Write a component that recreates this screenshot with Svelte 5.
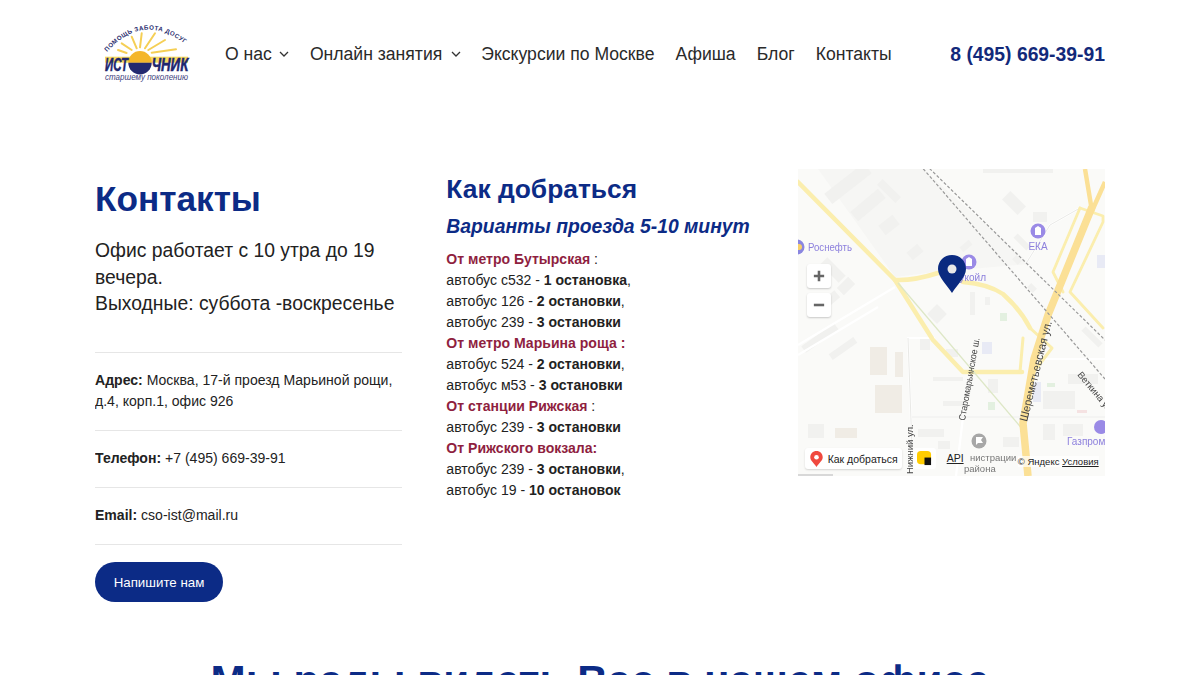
<script>
	const route = [
		{ t: 'От метро Бутырская', h: true, after: ' :' },
		{ t: 'автобус с532 - ', b: '1 остановка', after: ',' },
		{ t: 'автобус 126 - ', b: '2 остановки', after: ',' },
		{ t: 'автобус 239 - ', b: '3 остановки' },
		{ t: 'От метро Марьина роща :', h: true },
		{ t: 'автобус 524 - ', b: '2 остановки', after: ',' },
		{ t: 'автобус м53 - ', b: '3 остановки' },
		{ t: 'От станции Рижская', h: true, after: ' :' },
		{ t: 'автобус 239 - ', b: '3 остановки' },
		{ t: 'От Рижского вокзала:', h: true },
		{ t: 'автобус 239 - ', b: '3 остановки', after: ',' },
		{ t: 'автобус 19 - ', b: '10 остановок' }
	];

	// map blocks: x, y, w, h, angle
	const buildings = [
		[25, 8, 50, 13, -38], [52, 30, 36, 12, -40], [78, 18, 26, 8, 45], [82, 50, 18, 12, -38],
		[185, 0, 70, 4, 0], [205, 28, 22, 12, 45], [235, 43, 14, 10, 0], [215, 70, 18, 6, 45],
		[22, 96, 26, 10, 45], [40, 112, 16, 10, -45], [18, 128, 24, 9, -40], [2, 165, 40, 8, -35],
		[30, 176, 30, 7, -35], [72, 178, 17, 28, 0], [97, 183, 8, 25, 0], [10, 255, 16, 14, 0],
		[122, 169, 10, 12, 0], [172, 123, 5, 23, 0], [187, 128, 5, 8, 0], [132, 138, 14, 14, 45],
		[162, 74, 12, 6, -40], [282, 165, 24, 6, 45], [215, 88, 8, 6, 45], [230, 116, 8, 6, 45],
		[135, 208, 30, 4, 0], [190, 210, 10, 14, 0], [145, 232, 22, 5, 0], [148, 180, 12, 8, 0],
		[245, 222, 32, 18, 0], [270, 205, 30, 10, 0], [245, 255, 12, 16, 0], [265, 255, 20, 12, 0],
		[110, 78, 14, 10, -40], [120, 260, 26, 8, 0], [205, 268, 16, 10, 0], [140, 272, 12, 8, 0]
	];
</script>

<div class="page">
	<header class="top">
		<svg class="logo" viewBox="0 0 90 64" aria-label="Источник">
			<defs>
				<path id="arc" d="M3 30 Q 40 -12 85 25" />
			</defs>
			<text class="logo-arc"><textPath href="#arc" textLength="88">ПОМОЩЬ ЗАБОТА ДОСУГ</textPath></text>
			<g stroke="#f5cf55" stroke-width="2" stroke-linecap="round">
				<path d="M14 28 22.6 31" />
				<path d="M17.7 21.3 27.7 28" />
				<path d="M27.7 14.7 32.7 26.3" />
				<path d="M37.7 11.3 36 25.3" />
				<path d="M51 11.3 41 26.3" />
				<path d="M61 18 44.3 28" />
				<path d="M72 27.3 47.7 30.7" />
			</g>
			<rect x="1" y="34.7" width="83" height="6" fill="#f6d95f" />
			<path d="M24.3 40.7a11.7 11.7 0 0 1 23.4 0z" fill="#f4b62a" />
			<path d="M24.3 40.7a11.7 11.7 0 0 0 23.4 0z" fill="#23296f" />
			<text class="logo-name" x="1" y="48.7" textLength="23" lengthAdjust="spacingAndGlyphs">ИСТ</text>
			<text class="logo-name" x="47.7" y="48.7" textLength="36.6" lengthAdjust="spacingAndGlyphs">ЧНИК</text>
			<text class="logo-sub" x="1" y="57.5" textLength="83" lengthAdjust="spacingAndGlyphs">старшему поколению</text>
		</svg>
		<nav class="menu">
			<a href="#about">О нас <svg class="caret" viewBox="0 0 10 6"><path d="M1 1l4 4 4-4" /></svg></a>
			<a href="#online">Онлайн занятия <svg class="caret" viewBox="0 0 10 6"><path d="M1 1l4 4 4-4" /></svg></a>
			<a href="#tours">Экскурсии по Москве</a>
			<a href="#afisha">Афиша</a>
			<a href="#blog">Блог</a>
			<a href="#contacts">Контакты</a>
		</nav>
		<a class="phone" href="tel:+74956693991">8 (495) 669-39-91</a>
	</header>

	<main class="cols">
		<section class="info">
			<h1>Контакты</h1>
			<p class="hours">Офис работает с 10 утра до 19 вечера.<br />Выходные: суббота -воскресенье</p>
			<ul class="facts">
				<li><b>Адрес:</b> Москва, 17-й проезд Марьиной рощи, д.4, корп.1, офис 926</li>
				<li><b>Телефон:</b> +7 (495) 669-39-91</li>
				<li><b>Email:</b> cso-ist@mail.ru</li>
			</ul>
			<button type="button" class="write">Напишите нам</button>
		</section>

		<section class="way">
			<h2>Как добраться</h2>
			<h3>Варианты проезда 5-10 минут</h3>
			<div class="route">
				{#each route as r}
					<div>
						{#if r.h}<span class="stop">{r.t}</span>{:else}{r.t}<b>{r.b}</b>{/if}{r.after ?? ''}
					</div>
				{/each}
			</div>
		</section>

		<div class="map">
			<svg class="ground" viewBox="0 0 307 307">
				<rect width="307" height="307" fill="#fafaf8" />
				<path d="M20 0H125L232 95 137 103 97 108z" fill="#f6f6f4" />
				<g fill="#f1f1ef">
					{#each buildings as [x, y, w, h, a]}
						<rect {x} {y} width={w} height={h} transform="rotate({a} {x + w / 2} {y + h / 2})" />
					{/each}
				</g>
				<rect x="72" y="178" width="17" height="28" fill="#f0ece5" />
				<rect x="97" y="183" width="8" height="25" fill="#f0ece5" />
				<rect x="77" y="216" width="27" height="28" fill="#f0ece5" />
				<rect x="37" y="259" width="22" height="10" fill="#f0ece5" />
				<rect x="202" y="144" width="7" height="8" fill="#e3f0e0" />
				<rect x="190" y="233" width="7" height="8" fill="#e3f0e0" />
				<rect x="249" y="214" width="8" height="4" fill="#e3f0e0" />
				<rect x="184" y="173" width="10" height="12" fill="#e8eaf5" />
				<rect x="235" y="213" width="8" height="20" fill="#e8eaf5" />
				<rect x="299" y="86" width="8" height="13" fill="#e8eaf5" />
				<rect x="279" y="241" width="10" height="3" fill="#f5e2e2" />
				<g fill="none" stroke="#fff" stroke-width="2.2">
					<path d="M137 169H110L114 279" />
					<path d="M114 248H307" />
					<path d="M165 248 158 307" />
					<path d="M0 176 97 118" />
					<path d="M0 186 80 138" />
					<path d="M229 93 252 56 282 39" />
					<path d="M240 190H307" />
				</g>
				<g fill="none" stroke="#e9e9e6" stroke-width="1">
					<path d="M110 169 114 279" />
					<path d="M114 248H307" />
					<path d="M229 93 252 56 282 39" />
				</g>
				<g fill="none" stroke="#fbeeae" stroke-linejoin="round" stroke-linecap="round">
					<path stroke-width="4.5" d="M0 13 97 111 135 171 165 203H224" />
					<path stroke-width="4.5" d="M97 111Q115 112 140 104" />
					<path stroke-width="4.5" d="M165 113Q190 115 205 125 222 140 232 159" />
					<path stroke-width="3" d="M232 159 254 179 235 204M225 169 222 203" />
					<path stroke-width="2.8" d="M282 39 255 103 265 123" />
					<path stroke-width="2.8" d="M282 39 305 47 305 53 272 123 305 159" />
				</g>
				<path d="M100 114 226 262" fill="none" stroke="#dde7c6" stroke-width="1.3" />
				<g fill="none" stroke="#fbe096">
					<path stroke-width="7.5" d="M294 38 250 146 236 190 225 254 230 307" />
					<path stroke-width="4.5" d="M287 0 294 42M307 13 294 42" />
				</g>
				<g fill="none" stroke="#999" stroke-width="1.2" stroke-dasharray="3 2">
					<path d="M128 -4 307 171" />
					<path d="M122 -4 307 210" />
				</g>

				<g class="poi">
					<circle cx="240" cy="62" r="7.5" fill="#9a8ae6" />
					<path d="M237 66v-7l3-2 3 2v7z" fill="#fff" />
					<text x="240" y="81" text-anchor="middle">ЕКА</text>
					<circle cx="171" cy="93" r="7.5" fill="#9a8ae6" />
					<path d="M168 97v-7l3-2 3 2v7z" fill="#fff" />
					<text x="188" y="112" text-anchor="end">Лукойл</text>
					<circle cx="-1" cy="78" r="7.5" fill="#8a86e0" />
					<circle cx="1" cy="78" r="3" fill="#f7d06a" />
					<text x="10" y="82" class="rosneft" textLength="44" lengthAdjust="spacingAndGlyphs">Роснефть</text>
					<circle cx="303" cy="258" r="7" fill="#9a8ae6" />
					<text x="269" y="276">Газпром</text>
				</g>
				<g class="street">
					<text transform="translate(167 252) rotate(-80)" textLength="84" lengthAdjust="spacingAndGlyphs">Старомарьинское ш.</text>
					<text transform="translate(229 253) rotate(-76)" class="big" textLength="103" lengthAdjust="spacingAndGlyphs">Шереметьевская ул.</text>
					<text transform="translate(279 206) rotate(50)">Веткина ул.</text>
					<text transform="translate(115 305) rotate(-90)">Нижний ул.</text>
					<text x="172" y="292" class="grey">нистрации</text>
					<text x="166" y="303" class="grey">района</text>
				</g>
				<circle cx="181" cy="272" r="7.5" fill="#a7a7a7" />
				<path d="M178 276v-8h7l-2 3 2 3h-5" fill="#fff" />
				<rect x="0" y="305" width="35" height="2" fill="#d8d8d8" />
			</svg>

			<svg class="pin" viewBox="0 0 28 38">
				<path d="M14 0C6 0 0 6 0 14c0 8 9 16 14 24 5-8 14-16 14-24C28 6 22 0 14 0z" fill="#0a2a80" />
				<circle cx="14" cy="14" r="4.5" fill="#e8e8e8" />
			</svg>

			<div class="zoom plus"><svg viewBox="0 0 14 14"><path d="M7 1v12M1 7h12" /></svg></div>
			<div class="zoom minus"><svg viewBox="0 0 14 14"><path d="M1 7h12" /></svg></div>

			<div class="route-btn">
				<svg viewBox="0 0 14 18"><path d="M7 0C3 0 0 3 0 7c0 4 4 6 7 11 3-5 7-7 7-11 0-4-3-7-7-7z" fill="#f0493f" /><circle cx="7" cy="7" r="2.6" fill="#fff" /></svg>
				Как добраться
			</div>
			<div class="ya">
				<svg viewBox="0 0 16 16"><rect width="15" height="14" rx="4" fill="#fc0" /><rect x="8" y="7" width="7" height="8" fill="#111" /></svg>
			</div>
			<a class="api" href="#api">API</a>
			<div class="legal">© Яндекс <u>Условия</u></div>
		</div>
	</main>

	<h2 class="glad">Мы рады видеть Вас в нашем офисе</h2>
</div>

<style>
	:global(body) {
		margin: 0;
		background: #fff;
		font-family: 'Liberation Sans', Arial, sans-serif;
		color: #222;
		overflow: hidden;
	}

	.page {
		width: 1010px;
		margin: 0 auto;
		height: 675px;
		overflow: hidden;
	}

	.top {
		display: flex;
		align-items: center;
		height: 108px;
		padding-left: 9px;
	}
	.logo {
		width: 90px;
		height: 64px;
		flex: none;
	}
	.logo-arc {
		font-size: 6.2px;
		font-weight: 700;
		fill: #2b2f70;
	}
	.logo-name {
		font-size: 18px;
		font-weight: 700;
		font-style: italic;
		fill: #20266e;
		stroke: #20266e;
		stroke-width: 0.5;
	}
	.logo-sub {
		font-size: 8.5px;
		font-style: italic;
		fill: #3f4480;
	}

	.menu {
		display: flex;
		gap: 21px;
		margin-left: 31px;
		font-size: 17.6px;
	}
	.menu a {
		color: #2a2a2a;
		text-decoration: none;
		display: inline-flex;
		align-items: center;
		gap: 7px;
	}
	.menu a:nth-child(2) {
		gap: 9px;
		margin-right: -1px;
	}
	.caret {
		width: 10px;
		height: 6px;
		fill: none;
		stroke: #333;
		stroke-width: 1.3;
	}
	.phone {
		margin-left: auto;
		margin-top: 1px;
		font-size: 19.33px;
		font-weight: 700;
		color: #12297a;
		text-decoration: none;
	}

	.cols {
		display: grid;
		grid-template-columns: repeat(3, 1fr);
		column-gap: 44px;
		padding-top: 61px;
	}

	h1 {
		margin: 8px 0 0;
		font-size: 35.2px;
		line-height: 44px;
		color: #0c2b86;
	}
	.hours {
		margin: 17px 0 0;
		font-size: 19.33px;
		line-height: 26.5px;
		color: #222;
	}
	.facts {
		list-style: none;
		margin: 34px 0 0;
		padding: 0;
		border-top: 1px solid #e6e6e6;
		font-size: 14.05px;
		line-height: 21px;
	}
	.facts li {
		padding: 17px 0 18px;
		border-bottom: 1px solid #e6e6e6;
	}
	.write {
		display: block;
		margin-top: 17.6px;
		width: 128px;
		height: 40px;
		border: 0;
		border-radius: 20px;
		background: #0c2b86;
		color: #fff;
		font: 13.3px 'Liberation Sans', Arial, sans-serif;
	}

	.way h2 {
		margin: 0;
		font-size: 26.4px;
		line-height: 40px;
		color: #0c2b86;
	}
	h3 {
		margin: 3px 0 0;
		font-size: 19.33px;
		line-height: 30px;
		font-style: italic;
		color: #0c2b86;
	}
	.route {
		margin-top: 7px;
		font-size: 14.05px;
		line-height: 21px;
	}
	.stop {
		color: #8f1f3f;
		font-weight: 700;
	}

	.map {
		position: relative;
		width: 307px;
		height: 307px;
		overflow: hidden;
	}
	.ground {
		display: block;
		width: 307px;
		height: 307px;
		filter: blur(0.5px);
	}
	.poi text {
		font: 10px 'Liberation Sans', Arial, sans-serif;
		fill: #8d80dd;
	}
	.poi .rosneft {
		font-size: 10.5px;
	}
	.street text {
		font: 9.5px 'Liberation Sans', Arial, sans-serif;
		fill: #444;
	}
	.street .big {
		font-size: 11.5px;
	}
	.street .grey {
		fill: #777;
	}
	.pin {
		position: absolute;
		left: 140px;
		top: 86px;
		width: 28px;
		height: 38px;
	}
	.zoom {
		position: absolute;
		left: 9px;
		width: 24px;
		height: 24px;
		background: #fff;
		border-radius: 3px;
		box-shadow: 0 1px 2px rgba(0, 0, 0, 0.2);
		display: grid;
		place-items: center;
	}
	.zoom svg {
		width: 12px;
		height: 12px;
		fill: none;
		stroke: #666;
		stroke-width: 3;
	}
	.plus {
		top: 95px;
	}
	.minus {
		top: 124px;
	}
	.route-btn {
		position: absolute;
		left: 7px;
		top: 279px;
		height: 21px;
		width: 97px;
		background: #fff;
		box-shadow: 0 1px 2px rgba(0, 0, 0, 0.15);
		border-radius: 3px;
		display: flex;
		align-items: center;
		gap: 5px;
		padding-left: 5px;
		box-sizing: border-box;
		font-size: 10.5px;
		color: #222;
		white-space: nowrap;
	}
	.route-btn svg {
		width: 13px;
		height: 16px;
		flex: none;
	}
	.ya {
		position: absolute;
		left: 115px;
		top: 279px;
		width: 23px;
		height: 21px;
		background: #fff;
		border-radius: 3px;
		display: grid;
		place-items: center;
	}
	.ya svg {
		width: 15px;
		height: 15px;
	}
	.api {
		position: absolute;
		left: 149px;
		top: 283px;
		font-size: 10.5px;
		color: #222;
	}
	.legal {
		position: absolute;
		right: 6px;
		top: 287px;
		font-size: 9.5px;
		color: #222;
		background: rgba(255, 255, 255, 0.7);
		white-space: nowrap;
	}

	.glad {
		margin: 55px 0 0;
		text-align: center;
		font-size: 42.2px;
		line-height: 48px;
		color: #0c2b86;
	}
</style>
